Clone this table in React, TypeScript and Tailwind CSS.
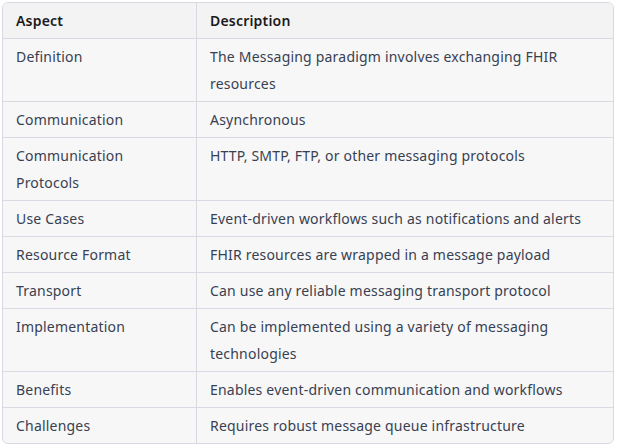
import React from "react";

const rows: { a: React.ReactNode; d: React.ReactNode }[] = [
  { a: "Definition", d: <>The Messaging paradigm involves exchanging FHIR<br />resources</> },
  { a: "Communication", d: "Asynchronous" },
  { a: <>Communication<br />Protocols</>, d: "HTTP, SMTP, FTP, or other messaging protocols" },
  { a: "Use Cases", d: "Event-driven workflows such as notifications and alerts" },
  { a: "Resource Format", d: "FHIR resources are wrapped in a message payload" },
  { a: "Transport", d: "Can use any reliable messaging transport protocol" },
  { a: "Implementation", d: <>Can be implemented using a variety of messaging<br />technologies</> },
  { a: "Benefits", d: "Enables event-driven communication and workflows" },
  { a: "Challenges", d: "Requires robust message queue infrastructure" },
];

export default function App() {
  return (
    <div
      className="w-[619px] h-[447px] bg-white p-[2px]"
      style={{ fontFamily: '"Noto Sans", sans-serif' }}
    >
      <div className="w-[612px] border border-[#d9d9e3] rounded-[6px] overflow-hidden bg-[#f7f7f8] text-[14px] leading-[27px] tracking-[0.2px]">
        <div className="grid grid-cols-[194px_1fr] bg-[#f3f3f4] border-b border-[#d9d9e3] font-semibold text-[#1a1a1a]">
          <div className="pl-[13px] py-1 border-r border-[#d9d9e3]">Aspect</div>
          <div className="pl-[13px] py-1">Description</div>
        </div>
        {rows.map((r, i) => (
          <div
            key={i}
            className={`grid grid-cols-[194px_1fr] text-[#374151] ${i < rows.length - 1 ? "border-b border-[#d9d9e3]" : ""}`}
          >
            <div className="pl-[13px] py-1 border-r border-[#d9d9e3]">{r.a}</div>
            <div className="pl-[13px] py-1">{r.d}</div>
          </div>
        ))}
      </div>
    </div>
  );
}
